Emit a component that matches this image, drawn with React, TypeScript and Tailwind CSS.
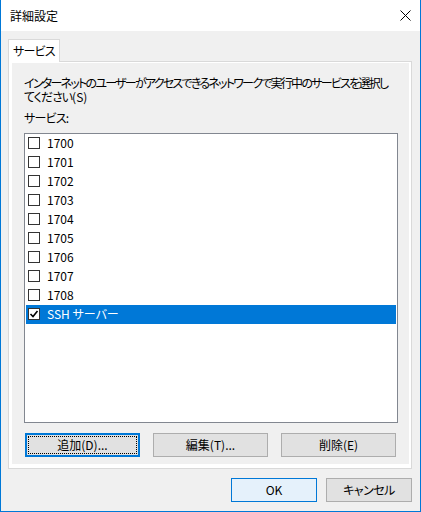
import React from "react";

const services = [
  { id: "1700", label: "1700", checked: false },
  { id: "1701", label: "1701", checked: false },
  { id: "1702", label: "1702", checked: false },
  { id: "1703", label: "1703", checked: false },
  { id: "1704", label: "1704", checked: false },
  { id: "1705", label: "1705", checked: false },
  { id: "1706", label: "1706", checked: false },
  { id: "1707", label: "1707", checked: false },
  { id: "1708", label: "1708", checked: false },
  { id: "ssh", label: "SSH サーバー", checked: true },
];

function CheckBox({ checked }: { checked: boolean }) {
  return (
    <div className="w-[12px] h-[12px] border border-[#333333] bg-white flex items-center justify-center shrink-0">
      {checked && (
        <svg width="10" height="10" viewBox="0 0 10 10">
          <path d="M1.5 5 L4 7.5 L8.5 2" fill="none" stroke="#000" strokeWidth="1.6" />
        </svg>
      )}
    </div>
  );
}

export default function App() {
  const selected = "ssh";

  return (
    <div className="w-[421px] h-[512px] flex flex-col bg-[#f0f0f0] border-x border-b border-[#0078d7] text-[12px] text-black font-['Noto_Sans_CJK_JP',sans-serif] [font-feature-settings:'palt'] overflow-hidden">
      {/* Title bar */}
      <div className="h-[31px] bg-white flex items-center justify-between pl-[9px] pr-[9px] shrink-0">
        <span className="leading-none">詳細設定</span>
        <svg width="11" height="11" viewBox="0 0 11 11">
          <path d="M0.5 0.5 L10.5 10.5 M10.5 0.5 L0.5 10.5" stroke="#000" strokeWidth="1" />
        </svg>
      </div>

      <div className="flex-1 flex flex-col pl-[7px] pr-[8px] pt-[8px]">
        {/* Tabs */}
        <div className="flex h-[22px]">
          <div className="relative z-10 w-[52px] h-[23px] bg-white border-t border-x border-[#d9d9d9] flex items-center justify-center leading-none tracking-[-0.8px]">
            サービス
          </div>
        </div>

        {/* Tab panel */}
        <div className="h-[408px] border border-[#d9d9d9] bg-white pt-[1px] pl-[3px] pr-[2px] pb-[4px] flex">
          <div className="flex-1 bg-[#f0f0f0] flex flex-col pl-[12px] pt-[13px]">
            <p className="leading-[14px] whitespace-nowrap">
              <span className="tracking-[-1.75px]">
                インターネットのユーザーがアクセスできるネットワークで実行中のサービスを選択し
              </span>
              <br />
              <span className="tracking-[-1px]">てください</span>(S)
            </p>
            <p className="leading-[14px] mt-[7px] tracking-[-0.8px]">サービス:</p>

            {/* List */}
            <div className="mt-[8px] w-[374px] h-[290px] border border-[#828790] bg-white">
              {services.map((s) => {
                const isSelected = s.id === selected;
                return (
                  <div
                    key={s.id}
                    className={`h-[19px] mx-[1px] flex items-center gap-[7px] pl-[2px] pb-[2px] ${
                      isSelected ? "bg-[#0078d7] text-white" : "text-black"
                    }`}
                  >
                    <CheckBox checked={s.checked} />
                    <span className="leading-none">{s.label}</span>
                  </div>
                );
              })}
            </div>

            {/* List buttons */}
            <div className="flex gap-[13px] mt-[10px] ml-[1px]">
              <button className="relative w-[115px] h-[24px] bg-[#e1e1e1] border-2 border-[#0078d7] flex items-center justify-center leading-none">
                <span className="absolute inset-[1px] border border-dotted border-black" />
                追加(D)...
              </button>
              <button className="w-[115px] h-[24px] bg-[#e1e1e1] border border-[#adadad] flex items-center justify-center leading-none">
                編集(T)...
              </button>
              <button className="w-[115px] h-[24px] bg-[#e1e1e1] border border-[#adadad] flex items-center justify-center leading-none">
                削除(E)
              </button>
            </div>
          </div>
        </div>

        {/* Dialog buttons */}
        <div className="flex justify-end gap-[9px] mt-[9px]">
          <button className="w-[86px] h-[24px] bg-[#e5f1fb] border border-[#0078d7] flex items-center justify-center leading-none">
            OK
          </button>
          <button className="w-[86px] h-[24px] bg-[#e1e1e1] border border-[#adadad] flex items-center justify-center leading-none tracking-[-0.5px]">
            キャンセル
          </button>
        </div>
      </div>
    </div>
  );
}
